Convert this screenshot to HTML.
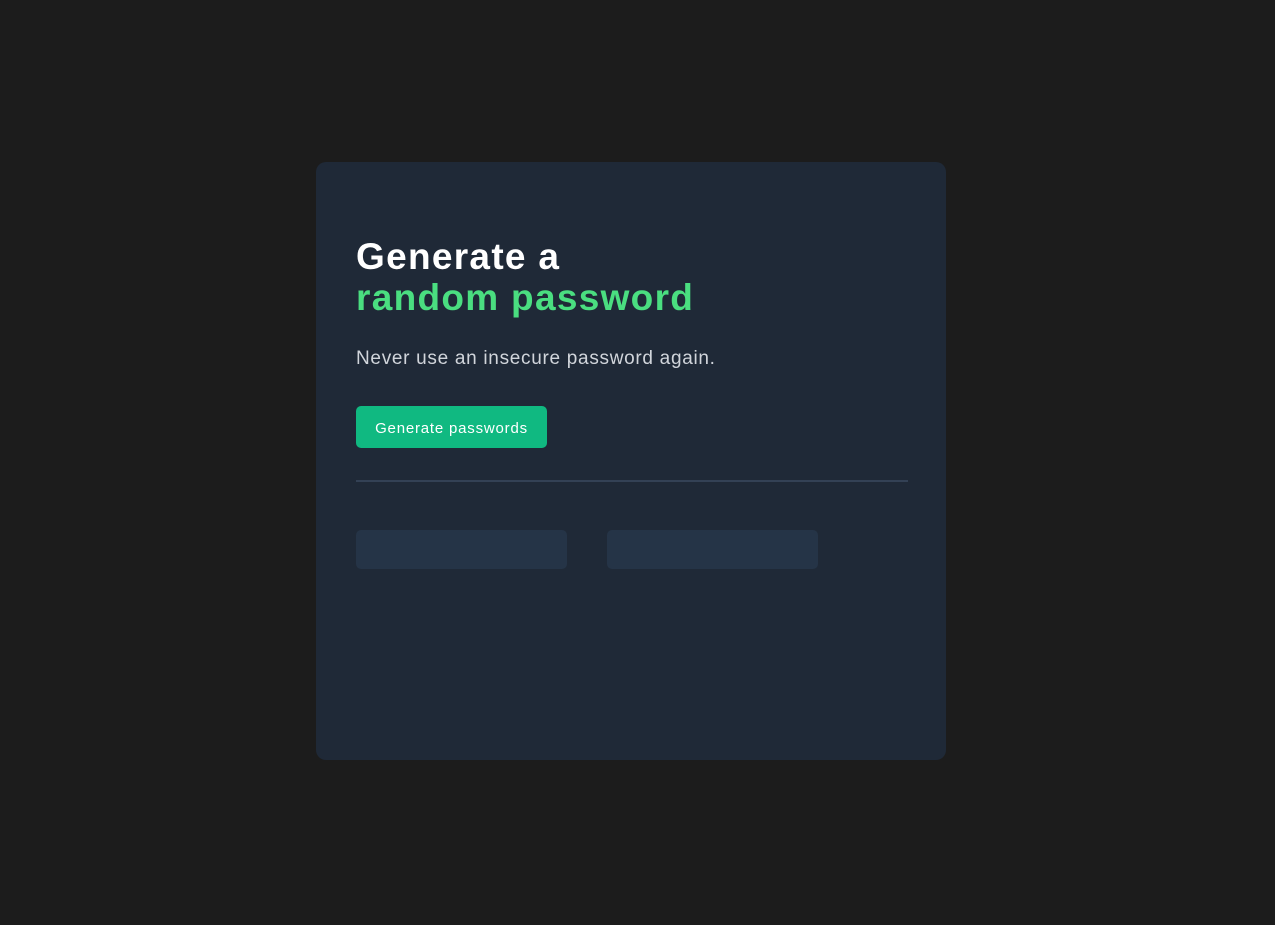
<!DOCTYPE html>
<html><head><style>
html,body{margin:0;padding:0;background:#1c1c1c;width:1275px;height:925px;overflow:hidden;font-family:"Liberation Sans",sans-serif}
.card{position:absolute;left:316px;top:162px;width:630px;height:598px;background:#1f2937;border-radius:10px}
h1{position:absolute;left:40px;top:74px;margin:0;font-size:37px;line-height:41px;font-weight:bold;color:#fff;letter-spacing:1.3px}
h1 span{color:#4ade80}
p{position:absolute;left:40px;top:186px;margin:0;font-size:19px;color:#d1d5db;letter-spacing:0.7px}
.btn{position:absolute;left:40px;top:244px;width:191px;height:42px;background:#10b981;border-radius:5px;color:#fff;font-size:15px;line-height:46px;text-align:center;letter-spacing:0.8px}
.hr{position:absolute;left:40px;top:318px;width:552px;height:2px;background:#334155}
.box{position:absolute;top:368px;width:211px;height:39px;background:#253447;border-radius:5px}
</style></head><body>
<div class="card">
<h1>Generate a<br><span>random password</span></h1>
<p>Never use an insecure password again.</p>
<div class="btn">Generate passwords</div>
<div class="hr"></div>
<div class="box" style="left:40px"></div>
<div class="box" style="left:291px"></div>
</div>
</body></html>
